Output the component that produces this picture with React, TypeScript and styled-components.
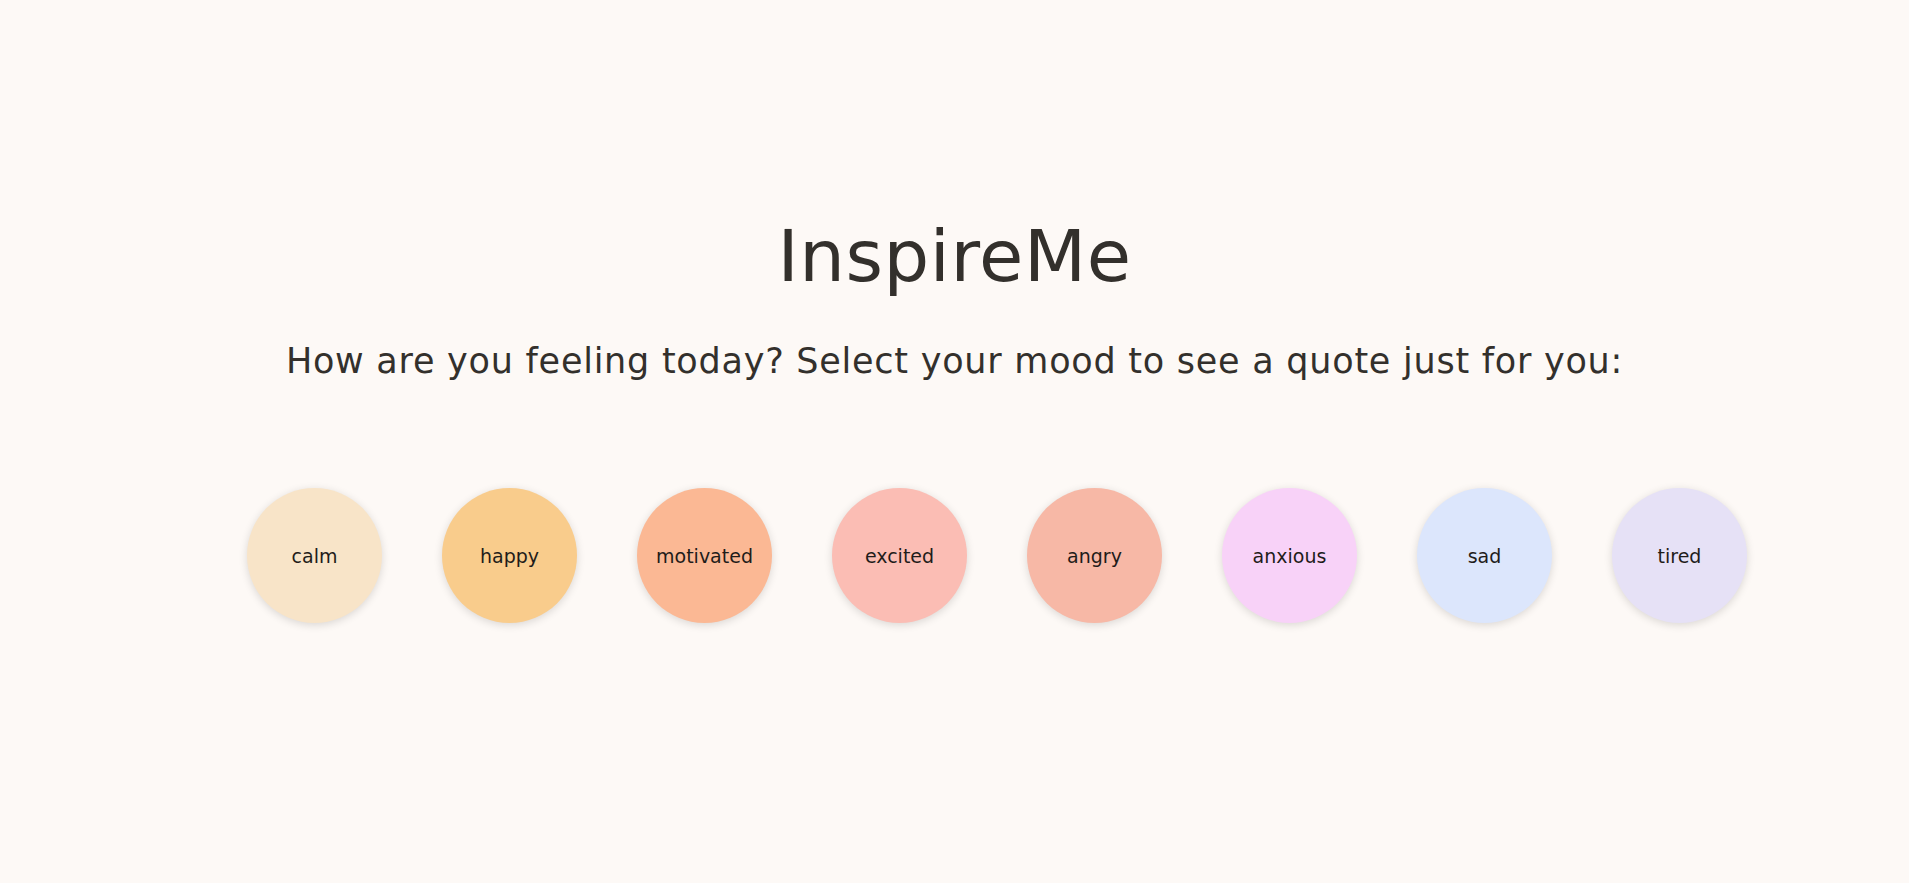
import React from "react";
import styled, { createGlobalStyle } from "styled-components";

const Global = createGlobalStyle`
  html, body { margin: 0; padding: 0; background: #fdf9f6; }
  body { font-family: "DejaVu Sans", "Noto Sans", sans-serif; color: #33302c; }
`;

const Page = styled.main`
  min-height: 883px;
  display: flex;
  flex-direction: column;
  align-items: center;
  padding-top: 212px;
  box-sizing: border-box;
`;

const Title = styled.h1`
  margin: 0;
  font-family: "DejaVu Sans", sans-serif;
  font-weight: 400;
  font-size: 72px;
  line-height: 88px;
  letter-spacing: 0.6px;
  color: #33302c;
`;

const Subtitle = styled.p`
  margin: 39px 0 0;
  font-family: "DejaVu Sans", sans-serif;
  font-size: 35px;
  line-height: 44px;
  letter-spacing: 0.75px;
  color: #33302c;
`;

const Moods = styled.div`
  margin-top: 105px;
  display: flex;
  gap: 60px;
  padding-left: 85px;
`;

const Mood = styled.button<{ $bg: string }>`
  width: 135px;
  height: 135px;
  border-radius: 50%;
  border: none;
  background: ${(p) => p.$bg};
  box-shadow: 0 2px 8px rgba(0, 0, 0, 0.14);
  display: flex;
  align-items: center;
  justify-content: center;
  font-family: "DejaVu Sans", sans-serif;
  font-size: 19px;
  color: #1f1c1a;
  cursor: pointer;
  padding: 0;
`;

const moods: [string, string][] = [
  ["calm", "#f8e4c8"],
  ["happy", "#f9cc8c"],
  ["motivated", "#fbb894"],
  ["excited", "#fbbdb4"],
  ["angry", "#f7b8a6"],
  ["anxious", "#f8d2f8"],
  ["sad", "#dce6fc"],
  ["tired", "#e6e1f6"],
];

export default function App() {
  return (
    <>
      <Global />
      <Page>
        <Title>InspireMe</Title>
        <Subtitle>How are you feeling today? Select your mood to see a quote just for you:</Subtitle>
        <Moods>
          {moods.map(([m, c]) => (
            <Mood key={m} $bg={c}>{m}</Mood>
          ))}
        </Moods>
      </Page>
    </>
  );
}
